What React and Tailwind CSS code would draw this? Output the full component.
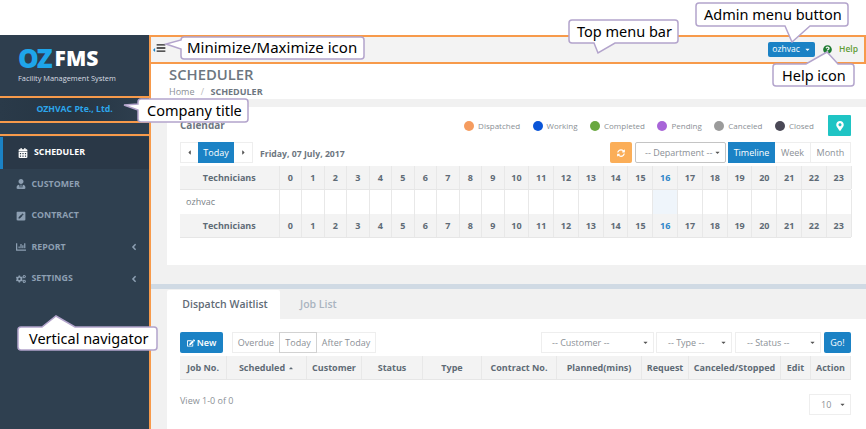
import React from "react";
import { FaCalendarAlt, FaUserTie, FaPenSquare, FaChartBar, FaCogs, FaSyncAlt, FaMapMarkerAlt, FaQuestionCircle, FaEdit, FaCaretDown, FaCaretLeft, FaCaretRight, FaCaretUp, FaAngleLeft, FaBars } from "react-icons/fa";

const hours = Array.from({ length: 24 }, (_, i) => i);
const font = "font-['Open_Sans',sans-serif]";
const callText = "font-['Noto_Sans',sans-serif] text-[14.5px] leading-none text-black whitespace-nowrap";

function NavItem({ icon, label, caret, active }) {
  return (
    <div className={`h-[31.5px] flex items-center pr-[10px] text-[8.8px] font-bold ${active ? "bg-[#2a3847] border-l-[3px] border-[#1b82c5] pl-[15px] text-white" : "pl-[16px] text-[#8d9fb2]"}`}>
      <span className="text-[10px] flex items-center">{icon}</span>
      <span className={`flex-1 ${active ? "ml-[6px]" : "ml-[5.5px]"}`}>{label}</span>
      {caret && <FaAngleLeft className="text-[10px]" />}
    </div>
  );
}

function Legend({ color, label }) {
  return (
    <div className="flex items-center gap-[4px]">
      <span className={`w-[10px] h-[10px] rounded-full ${color}`} />
      <span className="text-[8px] text-[#8a8f95]">{label}</span>
    </div>
  );
}

function CalRow({ label, head }) {
  return (
    <div className={`grid grid-cols-[99.5px_repeat(10,22.5px)_repeat(14,24.8px)] ${head ? "h-[24px] bg-[#f3f3f3] font-bold text-[#5f6b76] border-b border-[#e6e6e6]" : "h-[24px] bg-white text-[#7b8288]"}`}>
      <div className={`flex items-center border-r border-[#e8e8e8] ${head ? "justify-center" : "pl-[6px]"}`}>{label}</div>
      {hours.map((h) => (
        <div key={h} className={`flex items-center justify-center border-r border-[#e8e8e8] ${h === 16 ? (head ? "text-[#2f86c8]" : "bg-[#eff5fb]") : ""}`}>{head ? h : ""}</div>
      ))}
    </div>
  );
}

function Sel({ w, label, left }) {
  return (
    <div className={`${w} h-[21px] border border-[#eeeeee] bg-white flex items-center justify-between pr-[4px] text-[#8b9096] ${left}`}>
      <span>{label}</span>
      <FaCaretDown className="text-[7px] text-[#555]" />
    </div>
  );
}

const jobCols = [
  ["w-[47px]", "Job No."],
  ["w-[80px]", "Scheduled"],
  ["w-[55px]", "Customer"],
  ["w-[61px]", "Status"],
  ["w-[59px]", "Type"],
  ["w-[75px]", "Contract No."],
  ["w-[85px]", "Planned(mins)"],
  ["w-[47px]", "Request"],
  ["w-[92px]", "Canceled/Stopped"],
  ["w-[30px]", "Edit"],
  ["w-[40px]", "Action"],
];

export default function App() {
  return (
    <div className={`${font} relative w-[866px] h-[429px] overflow-hidden bg-white text-[9px]`}>
      <div className="h-[35px]" />
      <div className="flex h-[394px]">
        {/* Sidebar */}
        <aside className="w-[149px] shrink-0 bg-[#2f4050] flex flex-col">
          <div className="h-[61px] pt-[9px] pl-[18px] bg-[#2e3e4e]">
            <div className="flex items-center h-[28px]">
              <span className="text-[26px] leading-none font-extrabold tracking-[-2px] text-[#1ea5ea]">OZ</span>
              <span className="text-[21px] leading-none font-extrabold text-white ml-[4px]">FMS</span>
            </div>
            <div className="text-[7.4px] leading-[12px] text-[#d8dde2] whitespace-nowrap">Facility Management System</div>
          </div>
          <div className="h-[27px] border-y-2 border-[#f79a4b] bg-gradient-to-r from-[#2a3a49] via-[#263543] to-[#2f4050] flex items-center justify-center text-[8.7px] font-bold text-[#2ca6ec]">OZHVAC Pte., Ltd.</div>
          <div className="h-[11px]" />
          <nav className="flex-1 border-t-2 border-[#f79a4b] pt-[1px]">
            <NavItem icon={<FaCalendarAlt />} label="SCHEDULER" active />
            <NavItem icon={<FaUserTie />} label="CUSTOMER" />
            <NavItem icon={<FaPenSquare />} label="CONTRACT" />
            <NavItem icon={<FaChartBar />} label="REPORT" caret />
            <NavItem icon={<FaCogs />} label="SETTINGS" caret />
          </nav>
        </aside>

        {/* Main */}
        <main className="flex-1 min-w-0 flex flex-col border-l-2 border-[#f79a4b]">
          <div className="h-[29px] -ml-[2px] border-2 border-[#f79a4b] bg-[#f3f3f3] flex items-center justify-between pl-0 pr-[6px]">
            <div className="flex items-center text-[#222]">
              <FaCaretLeft className="text-[6px] text-[#1b82c5]" />
              <FaBars className="text-[10px] -ml-[1px] -mt-[3px]" />
            </div>
            <div className="flex items-center">
              <div className="h-[15px] w-[47px] ml-[1px] rounded-[2px] bg-[#1b82c5] text-white flex items-center justify-center gap-[4px] text-[8.5px]">ozhvac<FaCaretDown className="text-[7px]" /></div>
              <FaQuestionCircle className="text-[9px] text-[#1c7a30] ml-[8px]" />
              <span className="text-[8.5px] font-semibold text-[#5f9c35] ml-[7px]">Help</span>
            </div>
          </div>

          <div className="h-[35px] pl-[18px] pt-[1px] bg-white">
            <div className="text-[14.8px] leading-[18px] font-semibold text-[#6d7680]">SCHEDULER</div>
            <div className="text-[9px] leading-[17px] text-[#8a9096]">Home <span className="mx-[4px] text-[#bbb]">/</span> <span className="font-bold text-[#6d7680]">SCHEDULER</span></div>
          </div>

          <div className="flex-1 bg-[#f1f1f1] pt-[8px] pl-[16px] flex flex-col min-h-0">
            <section className="h-[158px] bg-white pl-[13px] pr-[15px] pt-[8px] text-[9px]">
              <div className="flex items-center h-[21px] justify-between">
                <span className="text-[10px] font-bold text-[#6d7680]">Calendar</span>
                <div className="flex items-center gap-[12.5px]">
                  <Legend color="bg-[#f59c5f]" label="Dispatched" />
                  <Legend color="bg-[#0a55d8]" label="Working" />
                  <Legend color="bg-[#69a840]" label="Completed" />
                  <Legend color="bg-[#a865d8]" label="Pending" />
                  <Legend color="bg-[#9b9b9b]" label="Canceled" />
                  <Legend color="bg-[#4a4856]" label="Closed" />
                  <div className="ml-[1.5px] w-[23px] h-[21px] bg-[#1fc4c4] flex items-center justify-center text-white text-[10px] rounded-[1px]"><FaMapMarkerAlt /></div>
                </div>
              </div>
              <div className="flex items-center h-[21px] mt-[6px]">
                <div className="flex h-[21px] w-[73px] border border-[#eeeeee] text-[#555]">
                  <span className="w-[17px] flex items-center justify-center text-[7px]"><FaCaretLeft /></span>
                  <span className="flex-1 -my-px bg-[#1b82c5] text-white flex items-center justify-center">Today</span>
                  <span className="w-[18px] flex items-center justify-center text-[7px]"><FaCaretRight /></span>
                </div>
                <span className="ml-[7px] mt-[4px] text-[8.7px] font-bold text-[#6d7680]">Friday, 07 July, 2017</span>
                <div className="flex-1" />
                <div className="w-[22px] h-[21px] rounded-[2px] bg-[#fbae58] flex items-center justify-center text-white text-[8px]"><FaSyncAlt /></div>
                <div className="ml-[3px] w-[91px] h-[21px] border border-[#c4c4c4] rounded-[2px] flex items-center justify-between pl-[9px] pr-[4px] text-[#8b9096]">
                  <span>-- Department --</span><FaCaretDown className="text-[7px] text-[#555]" />
                </div>
                <div className="ml-[2px] flex h-[21px] text-[#8b9096]">
                  <span className="w-[47px] bg-[#1b82c5] text-white flex items-center justify-center">Timeline</span>
                  <span className="w-[36px] border-y border-r border-[#eeeeee] flex items-center justify-center">Week</span>
                  <span className="w-[40px] border-y border-r border-[#eeeeee] flex items-center justify-center">Month</span>
                </div>
              </div>
              <div className="mt-[3px]">
                <CalRow label="Technicians" head />
                <CalRow label="ozhvac" />
                <CalRow label="Technicians" head />
              </div>
            </section>

            <div className="h-[19px]" />
            <div className="-ml-[16px] h-[5px] bg-[#d0dae4]" />
            <div className="h-[1px]" />
            <div className="flex h-[29px]">
              <div className="w-[113px] pl-[3px] bg-white rounded-t-[2px] flex items-center justify-center text-[10.5px] font-semibold text-[#5f6b76]">Dispatch Waitlist</div>
              <div className="ml-[20px] flex items-center text-[10.5px] font-semibold text-[#a9b4c0]">Job List</div>
            </div>
            <section className="flex-1 bg-white pl-[13px] pr-[15px] pt-[13px] text-[9px]">
              <div className="flex h-[21px] items-center">
                <div className="w-[43px] h-[21px] rounded-[2px] bg-[#1b82c5] text-white font-semibold flex items-center justify-center gap-[2px]"><FaEdit className="text-[8px]" />New</div>
                <div className="ml-[9px] flex h-[21px] border border-[#eeeeee] text-[#8b9096]">
                  <span className="w-[46px] flex items-center justify-center">Overdue</span>
                  <span className="w-[38px] -my-px border border-[#d2d2d2] flex items-center justify-center">Today</span>
                  <span className="w-[58px] flex items-center justify-center">After Today</span>
                </div>
                <div className="flex-1" />
                <Sel w="w-[113px]" label="-- Customer --" left="pl-[10px]" />
                <Sel w="w-[76px] ml-[2px]" label="-- Type --" left="pl-[11px]" />
                <Sel w="w-[86px] ml-[3px]" label="-- Status --" left="pl-[11px]" />
                <div className="ml-[3px] w-[27px] h-[21px] rounded-[2px] bg-[#1b82c5] text-white flex items-center justify-center">Go!</div>
              </div>
              <div className="mt-[3px] flex h-[24px] bg-[#f3f3f3] border-b border-[#e6e6e6] font-bold text-[#5f6b76]">
                {jobCols.map(([w, l]) => (
                  <div key={l} className={`${w} shrink-0 flex items-center justify-center border-r border-[#e8e8e8] whitespace-nowrap gap-[3px]`}>
                    {l}{l === "Scheduled" && <FaCaretUp className="text-[6px]" />}
                  </div>
                ))}
              </div>
              <div className="flex justify-between">
                <span className="mt-[14px] text-[#8b9096]">View 1-0 of 0</span>
                <div className="mt-[14px] w-[42px] h-[21px] border border-[#eeeeee] flex items-center justify-between pl-[11px] pr-[4px] text-[#8b9096]">
                  <span>10</span><FaCaretDown className="text-[7px] text-[#555]" />
                </div>
              </div>
            </section>
          </div>
        </main>
      </div>

      {/* Callouts */}
      <div className="absolute left-[165px] top-[36px] w-[200px] h-[24px]">
        <svg width="200" height="24" className="absolute inset-0 overflow-visible"><path d="M19 1H196Q199 1 199 4V20Q199 23 196 23H19Q16 23 16 20V13L1 8L16 4Q16 1 19 1Z" fill="#fff" stroke="#b3a4cc" strokeWidth="1.5" /></svg>
        <span className={`${callText} text-[15px] absolute left-[22px] top-[4px]`}>Minimize/Maximize icon</span>
      </div>
      <div className="absolute left-[123px] top-[98px] w-[126px] h-[25px]">
        <svg width="126" height="25" className="absolute inset-0 overflow-visible"><path d="M18 1H122Q125 1 125 4V21Q125 24 122 24H18Q15 24 15 21V12L1 7L15 6V4Q15 1 18 1Z" fill="#fff" stroke="#b3a4cc" strokeWidth="1.5" /></svg>
        <span className={`${callText} absolute left-[24px] top-[5px]`}>Company title</span>
      </div>
      <div className="absolute left-[17px] top-[315px] w-[141px] h-[36px]">
        <svg width="141" height="36" className="absolute inset-0 overflow-visible"><path d="M4 12H25L39 1L58 12H137Q140 12 140 15V32Q140 35 137 35H4Q1 35 1 32V15Q1 12 4 12Z" fill="#fff" stroke="#b3a4cc" strokeWidth="1.5" /></svg>
        <span className={`${callText} absolute left-[12px] top-[16px]`}>Vertical navigator</span>
      </div>
      <div className="absolute left-[568px] top-[19px] w-[111px] h-[35px]">
        <svg width="111" height="35" className="absolute inset-0 overflow-visible"><path d="M4 1H107Q110 1 110 4V21Q110 24 107 24H47L30 34L26 24H4Q1 24 1 21V4Q1 1 4 1Z" fill="#fff" stroke="#b3a4cc" strokeWidth="1.5" /></svg>
        <span className={`${callText} absolute left-[9px] top-[5px]`}>Top menu bar</span>
      </div>
      <div className="absolute left-[695px] top-[2px] w-[154px] h-[41px]">
        <svg width="154" height="41" className="absolute inset-0 overflow-visible"><path d="M4 1H150Q153 1 153 4V21Q153 24 150 24H115L97 40L90 24H4Q1 24 1 21V4Q1 1 4 1Z" fill="#fff" stroke="#b3a4cc" strokeWidth="1.5" /></svg>
        <span className={`${callText} absolute left-[9px] top-[5px]`}>Admin menu button</span>
      </div>
      <div className="absolute left-[772px] top-[51px] w-[83px] h-[36px]">
        <svg width="83" height="36" className="absolute inset-0 overflow-visible"><path d="M4 13H34L55 1L66 13H79Q82 13 82 16V32Q82 35 79 35H4Q1 35 1 32V16Q1 13 4 13Z" fill="#fff" stroke="#b3a4cc" strokeWidth="1.5" /></svg>
        <span className={`${callText} absolute left-[10px] top-[17px]`}>Help icon</span>
      </div>
    </div>
  );
}
